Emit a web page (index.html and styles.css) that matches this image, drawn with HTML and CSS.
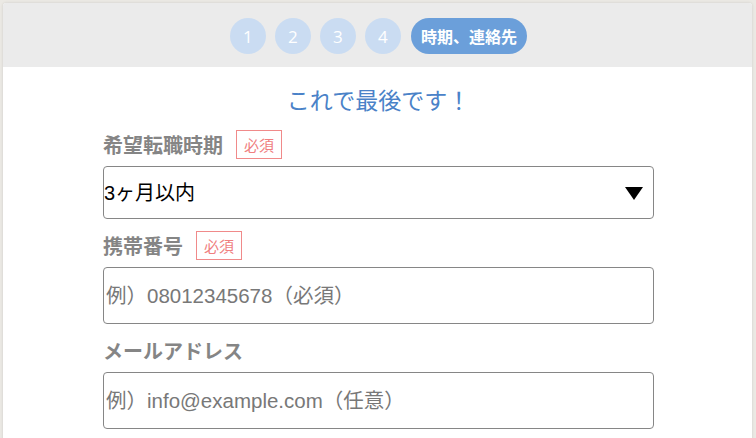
FILE: index.html
```html
<!DOCTYPE html>
<html lang="ja">
<head>
<meta charset="utf-8">
<title>フォーム</title>
<link rel="stylesheet" href="styles.css">
</head>
<body>
<div class="card">
  <div class="steps">
    <span class="step">1</span>
    <span class="step">2</span>
    <span class="step">3</span>
    <span class="step">4</span>
    <span class="step step-active">時期、連絡先</span>
  </div>
  <div class="content">
    <h2 class="title">これで最後です！</h2>
    <form class="form">
      <div class="field">
        <div class="label-row"><span class="label">希望転職時期</span><span class="badge">必須</span></div>
        <div class="select-wrap">
          <select class="select">
            <option>3ヶ月以内</option>
            <option>6ヶ月以内</option>
            <option>1年以内</option>
          </select>
          <svg class="arrow" width="18" height="13" viewBox="0 0 18 13"><path d="M0 0 H18 L9 13 Z" fill="#000"/></svg>
        </div>
      </div>
      <div class="field">
        <div class="label-row"><span class="label">携帯番号</span><span class="badge">必須</span></div>
        <input class="input" type="tel" placeholder="例）08012345678（必須）">
      </div>
      <div class="field">
        <div class="label-row"><span class="label">メールアドレス</span></div>
        <input class="input" type="email" placeholder="例）info@example.com（任意）">
      </div>
    </form>
  </div>
</div>
</body>
</html>
```
FILE: styles.css
```css
* { box-sizing: border-box; }
html, body { margin: 0; padding: 0; }
body {
  background: #ebe9e4;
  font-family: "Liberation Sans", "Noto Sans CJK JP", sans-serif;
  padding: 3px 4px 0 3px;
  height: 438px;
  overflow: hidden;
}
.card {
  background: #fff;
  border-radius: 3px 3px 0 0;
  box-shadow: 0 0 3px rgba(0,0,0,0.12);
  height: 600px;
  overflow: hidden;
}
.steps {
  background: #ebebeb;
  height: 64px;
  display: flex;
  justify-content: center;
  align-items: flex-start;
  padding-top: 15px;
  padding-left: 2px;
  gap: 9px;
}
.step {
  width: 36px;
  height: 36px;
  border-radius: 18px;
  background: #cadcf2;
  color: #fff;
  font-family: "Open Sans", "Noto Sans", sans-serif;
  font-size: 17px;
  display: flex;
  align-items: center;
  justify-content: center;
}
.step-active {
  width: auto;
  background: #6b9fda;
  padding: 0 10px;
  font-family: "Noto Sans CJK JP", sans-serif;
  font-weight: bold;
  font-size: 16px;
  margin-left: 1px;
}
.content {
  width: 551px;
  margin: 0 0 0 100px;
}
.title {
  margin: 15px 0 14px;
  text-align: center;
  font-family: "Noto Sans CJK JP", sans-serif;
  font-weight: normal;
  font-size: 23px;
  line-height: 34px;
  color: #4a82c8;
}
.form {
  display: flex;
  flex-direction: column;
  gap: 12px;
}
.field {
  display: flex;
  flex-direction: column;
  gap: 7px;
}
.label-row {
  display: flex;
  align-items: center;
  height: 29px;
  gap: 13px;
}
.label {
  font-family: "Noto Sans CJK JP", sans-serif;
  font-size: 20px;
  font-weight: bold;
  color: #858585;
  line-height: 29px;
}
.badge {
  font-family: "Noto Sans CJK JP", sans-serif;
  border: 1px solid #f08a8a;
  color: #f07f7f;
  font-size: 15px;
  height: 29px;
  line-height: 27px;
  padding: 0 7px;
}
.select-wrap {
  position: relative;
}
.select {
  appearance: none;
  -webkit-appearance: none;
  width: 551px;
  height: 53px;
  border: 1px solid #868686;
  border-radius: 4px;
  background: #fff;
  font-family: "Liberation Sans", "Noto Sans CJK JP", sans-serif;
  font-size: 20px;
  color: #000;
  padding: 0;
  margin: 0;
}
.arrow {
  position: absolute;
  right: 11px;
  top: 21px;
  pointer-events: none;
}
.input {
  width: 551px;
  height: 57px;
  border: 1px solid #868686;
  border-radius: 4px;
  font-family: "Liberation Sans", "Noto Sans CJK JP", sans-serif;
  font-size: 20.5px;
  padding: 0 2px;
  margin: 0;
  color: #000;
}
.input::placeholder {
  color: #787878;
}
```
